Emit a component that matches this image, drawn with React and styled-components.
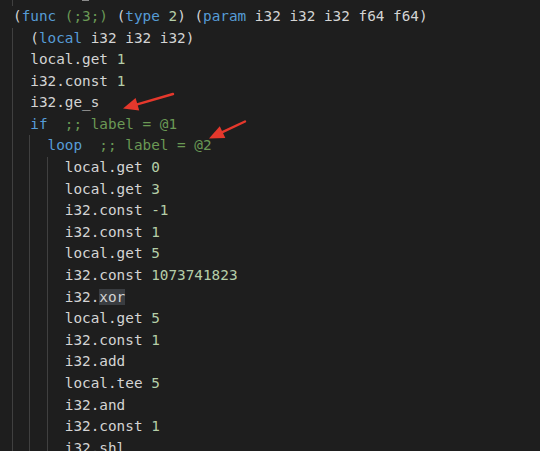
import React from "react";
import styled, { createGlobalStyle } from "styled-components";

const Global = createGlobalStyle`
  html, body {
    margin: 0;
    padding: 0;
    background: #1e1e1e;
  }
`;

const Editor = styled.div`
  position: relative;
  width: 540px;
  height: 451px;
  overflow: hidden;
  background: #1e1e1e;
  padding: 1.5px 0 0 13px;
  box-sizing: border-box;
  font-family: "DejaVu Sans Mono", "Liberation Mono", monospace;
  font-size: 14.35px;
  color: #d4d4d4;
`;

const Line = styled.div`
  display: flex;
  height: 21.6px;
  line-height: 21.6px;
  white-space: pre;
  margin-top: ${(p) => (p.$stub ? "-17.2px" : "0")};
`;

const Guide = styled.span`
  display: inline-block;
  width: 2ch;
  margin-left: -1px;
  margin-right: 1px;
  box-sizing: border-box;
  border-left: 1px solid #404040;
`;

const Kw = styled.span`
  color: #569cd6;
`;
const Num = styled.span`
  color: #b5cea8;
`;
const Cm = styled.span`
  color: #6a9955;
`;
const Hl = styled.span`
  background: #3a3d41;
`;
const Box = styled.span`
  display: inline-block;
  width: 7px;
  height: 14px;
  margin-top: 3px;
  box-sizing: border-box;
  border: 1px solid #8a8a8a;
`;

const Overlay = styled.svg`
  position: absolute;
  left: 0;
  top: 0;
  pointer-events: none;
`;

const lines = [
  { indent: 1, stub: true, body: <>{"      "}<Box /></> },
  {
    indent: 0,
    body: (
      <>
        (<Kw>func</Kw> <Cm>(;3;)</Cm> (<Kw>type</Kw> <Num>2</Num>) (<Kw>param</Kw> i32 i32 i32 f64 f64)
      </>
    ),
  },
  { indent: 1, body: <>(<Kw>local</Kw> i32 i32 i32)</> },
  { indent: 1, body: <>local.get <Num>1</Num></> },
  { indent: 1, body: <>i32.const <Num>1</Num></> },
  { indent: 1, body: <>i32.ge_s</> },
  { indent: 1, body: <><Kw>if</Kw>{"  "}<Cm>;; label = @1</Cm></> },
  { indent: 2, body: <><Kw>loop</Kw>{"  "}<Cm>;; label = @2</Cm></> },
  { indent: 3, body: <>local.get <Num>0</Num></> },
  { indent: 3, body: <>local.get <Num>3</Num></> },
  { indent: 3, body: <>i32.const <Num>-1</Num></> },
  { indent: 3, body: <>i32.const <Num>1</Num></> },
  { indent: 3, body: <>local.get <Num>5</Num></> },
  { indent: 3, body: <>i32.const <Num>1073741823</Num></> },
  { indent: 3, body: <>i32.<Hl>xor</Hl></> },
  { indent: 3, body: <>local.get <Num>5</Num></> },
  { indent: 3, body: <>i32.const <Num>1</Num></> },
  { indent: 3, body: <>i32.add</> },
  { indent: 3, body: <>local.tee <Num>5</Num></> },
  { indent: 3, body: <>i32.and</> },
  { indent: 3, body: <>i32.const <Num>1</Num></> },
  { indent: 3, body: <>i32.shl</> },
];

function Arrow({ from, to, head = 15, half = 6.5 }) {
  const dx = to[0] - from[0];
  const dy = to[1] - from[1];
  const len = Math.hypot(dx, dy);
  const ux = dx / len;
  const uy = dy / len;
  const bx = to[0] - ux * head;
  const by = to[1] - uy * head;
  const nx = -uy;
  const ny = ux;
  const pts = [
    [to[0], to[1]],
    [bx + nx * half, by + ny * half],
    [bx - nx * half, by - ny * half],
  ]
    .map((p) => p.join(","))
    .join(" ");
  return (
    <g>
      <line
        x1={from[0]}
        y1={from[1]}
        x2={bx + ux * 2}
        y2={by + uy * 2}
        stroke="#e5382c"
        strokeWidth="2.4"
        strokeLinecap="round"
      />
      <polygon points={pts} fill="#e5382c" />
    </g>
  );
}

export default function App() {
  return (
    <>
      <Global />
      <Editor>
        {lines.map((l, i) => (
          <Line key={i} $stub={l.stub}>
            {Array.from({ length: l.indent }).map((_, j) => (
              <Guide key={j} />
            ))}
            <span>{l.body}</span>
          </Line>
        ))}
        <Overlay width="540" height="451" viewBox="0 0 540 451">
          <Arrow from={[173, 94]} to={[123, 108.5]} />
          <Arrow from={[245, 121.5]} to={[209, 138.5]} />
        </Overlay>
      </Editor>
    </>
  );
}
